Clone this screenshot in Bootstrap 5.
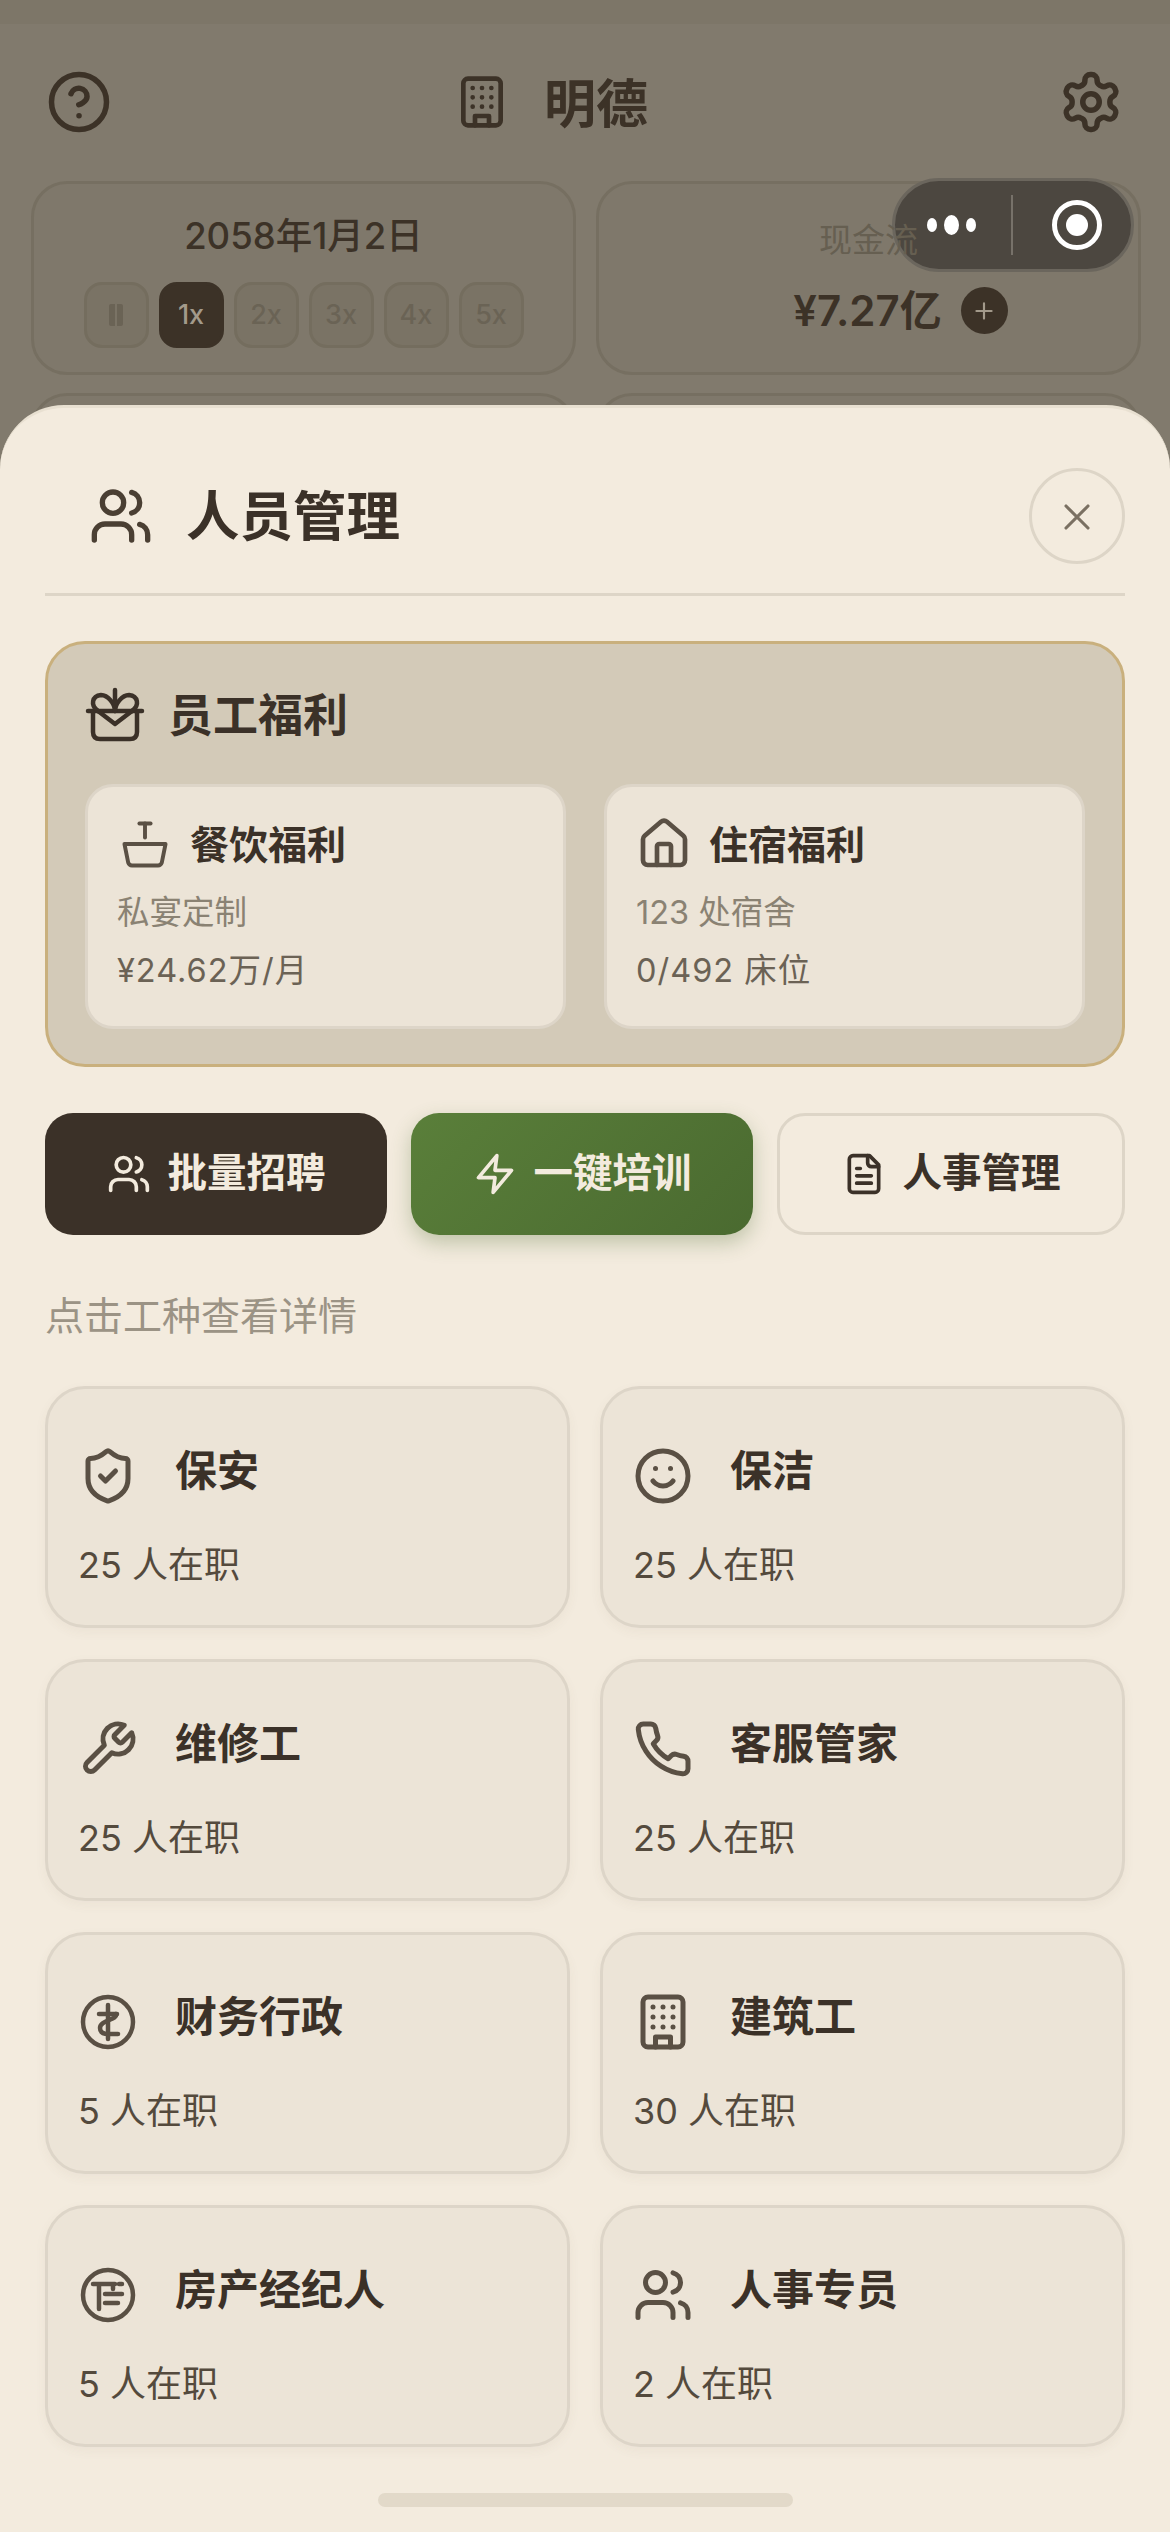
<!DOCTYPE html>
<html lang="zh-CN">
<head>
  <meta charset="UTF-8">
  <title>人员管理</title>
  <link href="https://cdn.jsdelivr.net/npm/bootstrap@5.3.3/dist/css/bootstrap.min.css" rel="stylesheet">
  <style>
    body {
      width: 1170px;
      height: 2532px;
      overflow: hidden;
      background: #f3ebde;
      color: #3b3128;
      font-family: Inter, "Noto Sans CJK SC", sans-serif;
    }

    svg.ico {
      fill: none;
      stroke: currentColor;
      stroke-width: 2;
      stroke-linecap: round;
      stroke-linejoin: round;
      flex-shrink: 0;
    }

    /* dimmed game screen behind the sheet */
    .backdrop {
      position: relative;
      height: 520px;
      overflow: hidden;
      background: #817a6d;
      color: #3c3227;
    }
    .status-strip { height: 24px; background: #7d7668; }
    .top-bar { height: 156px; padding: 0 46px; }
    .top-bar svg { color: #3c3227; }
    .top-group { margin-right: 68px; }
    .top-name { font-size: 52px; font-weight: 700; line-height: 1; margin-left: 34px; margin-top: 5px; }
    .stat-grid { display: grid; grid-template-columns: 545px 545px; column-gap: 20px; row-gap: 18px; padding: 1px 31px 0; }
    .stat-box { height: 194px; border: 3px solid #766f61; border-radius: 36px; background: #7f786b; }
    .stat-date { font-size: 36.5px; font-weight: 500; line-height: 1; margin-top: 10px; margin-bottom: 27px; }
    .speed-row { gap: 10px; }
    .speed-btn {
      width: 65px; height: 66px; border-radius: 18px;
      background: #7a7365; border: 3px solid #746d5e;
      color: #6a6355; font-size: 27px; font-weight: 500;
    }
    .speed-btn.on { background: #3c3227; border-color: #3c3227; color: #a39a8b; }
    .speed-bars { width: 14px; height: 22px; border-left: 6px solid #6a6355; border-right: 6px solid #6a6355; border-radius: 2px; }
    .cash-label { font-size: 33px; line-height: 1; color: #665f51; margin-bottom: 30px; margin-top: 2px; z-index: 2; }
    .cash-row { margin-left: 64px; }
    .cash-value { font-size: 42px; font-weight: 600; line-height: 1; }
    .cash-plus { width: 47px; height: 47px; border-radius: 50%; background: #3c3227; color: #a39a8b; margin-left: 19px; }
    .capsule {
      position: absolute; left: 892px; top: 178px; z-index: 1;
      width: 242px; height: 94px; border-radius: 47px;
      background: #4c4740; border: 3px solid #6b665d;
    }
    .capsule-dots { width: 116px; color: #fff; gap: 7px; padding-right: 3px; }
    .capsule-dots i { display: block; background: #fff; border-radius: 50%; width: 10px; height: 14px; }
    .capsule-dots i.mid { width: 15px; height: 20px; }
    .capsule-line { width: 2px; height: 60px; background: #77726a; }
    .capsule-ring { width: 50px; height: 50px; border: 5px solid #fff; border-radius: 50%; margin-left: 39px; }
    .capsule-ring span { display: block; width: 22px; height: 22px; border-radius: 50%; background: #fff; }

    /* sheet */
    .sheet {
      position: absolute; left: 0; right: 0; top: 405px; bottom: 0; z-index: 3;
      background: #f3ebde;
      border-top: 3px solid #e8e0d1;
      border-radius: 64px 64px 0 0;
      padding: 0 45px;
    }
    .sheet-head { height: 188px; border-bottom: 3px solid #ddd5c7; padding: 30px 0 0 44px; }
    .sheet-head svg { color: #4a3f33; }
    .sheet-title { font-size: 53.5px; font-weight: 700; line-height: 1; margin-left: 33px; margin-top: 2px; }
    .close-btn {
      width: 96px; height: 96px; border-radius: 50%;
      border: 3px solid #ddd5c7; background: #f3ebde;
      color: #7a7062; padding: 0;
    }
    .close-btn svg { color: #7a7062; margin-top: 2px; }

    .welfare {
      margin-top: 45px; height: 426px;
      background: #d3cab8; border: 3px solid #c9b07d; border-radius: 40px;
      padding: 36px 37px 0;
    }
    .welfare-head { height: 68px; margin-bottom: 36px; }
    .welfare-title { font-size: 45px; font-weight: 700; line-height: 1; margin-left: 23px; margin-top: 3px; }
    .welfare-grid { display: grid; grid-template-columns: 481px 481px; column-gap: 38px; }
    .welfare-box {
      height: 245px; background: #ece4d7; border: 3px solid #ddd5c8; border-radius: 28px;
      padding: 27px 0 0 29px;
    }
    .welfare-box-head { height: 60px; }
    .welfare-box-head svg { color: #5a5044; }
    .welfare-box-title { font-size: 39px; font-weight: 700; line-height: 1; margin-left: 17px; }
    .welfare-sub { font-size: 32.5px; line-height: 1; color: #8a8273; margin-top: 23px; }
    .welfare-cost { font-size: 32.5px; line-height: 1; color: #6b6255; margin-top: 25px; letter-spacing: 1px; }

    .action-row { display: grid; grid-template-columns: 342px 342px 348px; column-gap: 24px; margin-top: 46px; }
    .action-btn {
      height: 122px; border-radius: 28px; font-size: 39.5px; font-weight: 600;
      display: flex; align-items: center; justify-content: center; gap: 17px; padding: 0; line-height: 1;
    }
    .act-dark, .act-dark:hover { background: #3b3128; color: #f3ebde; border: 0; }
    .act-green, .act-green:hover {
      background: linear-gradient(135deg, #5a7f3a, #4a6a30); color: #f3ebde; border: 0;
      box-shadow: 0 8px 20px rgba(74, 106, 48, .3);
    }
    .act-plain, .act-plain:hover { background: #f3ebde; color: #3b3128; border: 3px solid #ddd5c7; }

    .hint { font-size: 39px; line-height: 1; color: #9b9385; margin: 61px 0 51px; }

    .job-grid { display: grid; grid-template-columns: 525px 525px; column-gap: 30px; row-gap: 31px; }
    .job-box {
      height: 242px; background: #ece4d7; border: 3px solid #ddd5c8; border-radius: 40px;
      padding: 0 0 0 30px; box-shadow: 0 4px 12px rgba(90, 80, 60, .05);
    }
    .job-head { height: 60px; margin-top: 57px; }
    .job-head svg { color: #5a5044; }
    .job-name { font-size: 42px; font-weight: 700; line-height: 1; margin-left: 37px; margin-top: -10px; }
    .job-count { font-size: 36px; line-height: 1; color: #544a3d; margin-top: 41px; }

    .home-bar {
      position: absolute; left: 378px; bottom: 25px;
      width: 415px; height: 14px; border-radius: 7px; background: #e2d9c9;
    }
  </style>
</head>
<body>

  <svg width="0" height="0" class="position-absolute">
    <defs>
      <symbol id="i-users" viewBox="0 0 24 24"><path d="M16 21v-2a4 4 0 0 0-4-4H6a4 4 0 0 0-4 4v2"/><circle cx="9" cy="7" r="4"/><path d="M22 21v-2a4 4 0 0 0-3-3.87"/><path d="M16 3.13a4 4 0 0 1 0 7.75"/></symbol>
      <symbol id="i-help" viewBox="0 0 24 24"><circle cx="12" cy="12" r="10"/><path d="M9.09 9a3 3 0 0 1 5.83 1c0 2-3 3-3 3"/><path d="M12 17h.01"/></symbol>
      <symbol id="i-building" viewBox="0 0 24 24"><rect x="4" y="2" width="16" height="20" rx="2"/><path d="M9 22v-4h6v4"/><path d="M8 6h.01M12 6h.01M16 6h.01M8 10h.01M12 10h.01M16 10h.01M8 14h.01M12 14h.01M16 14h.01"/></symbol>
      <symbol id="i-gear" viewBox="0 0 24 24"><path d="M12.22 2h-.44a2 2 0 0 0-2 2v.18a2 2 0 0 1-1 1.73l-.43.25a2 2 0 0 1-2 0l-.15-.08a2 2 0 0 0-2.73.73l-.22.38a2 2 0 0 0 .73 2.73l.15.1a2 2 0 0 1 1 1.72v.51a2 2 0 0 1-1 1.74l-.15.09a2 2 0 0 0-.73 2.73l.22.38a2 2 0 0 0 2.73.73l.15-.08a2 2 0 0 1 2 0l.43.25a2 2 0 0 1 1 1.73V20a2 2 0 0 0 2 2h.44a2 2 0 0 0 2-2v-.18a2 2 0 0 1 1-1.73l.43-.25a2 2 0 0 1 2 0l.15.08a2 2 0 0 0 2.73-.73l.22-.39a2 2 0 0 0-.73-2.73l-.15-.08a2 2 0 0 1-1-1.74v-.5a2 2 0 0 1 1-1.74l.15-.09a2 2 0 0 0 .73-2.73l-.22-.38a2 2 0 0 0-2.73-.73l-.15.08a2 2 0 0 1-2 0l-.43-.25a2 2 0 0 1-1-1.73V4a2 2 0 0 0-2-2z"/><circle cx="12" cy="12" r="3"/></symbol>
      <symbol id="i-x" viewBox="0 0 24 24"><path d="M18 6 6 18M6 6l12 12"/></symbol>
      <symbol id="i-plus" viewBox="0 0 24 24"><path d="M12 5v14M5 12h14"/></symbol>
      <symbol id="i-gift" viewBox="0 0 60 60"><path d="M3 27H57"/><path d="M8 27V48q0 7 7 7H45q7 0 7-7V27"/><path d="M13 27 30 40 47 27"/><path d="M13 27C5 21 7 12 16 11 23 11 30 20 30 27"/><path d="M47 27C55 21 53 12 44 11 37 11 30 20 30 27"/><path d="M30 6V27"/></symbol>
      <symbol id="i-bowl" viewBox="0 0 60 60"><path d="M24 8H36"/><path d="M30 8V23"/><path d="M8 30H52L48 50Q47 53 44 53H16Q13 53 12 50Z"/></symbol>
      <symbol id="i-house" viewBox="0 0 24 24"><path d="M15 21v-8a1 1 0 0 0-1-1h-4a1 1 0 0 0-1 1v8"/><path d="M3 10a2 2 0 0 1 .709-1.528l7-5.999a2 2 0 0 1 2.582 0l7 5.999A2 2 0 0 1 21 10v9a2 2 0 0 1-2 2H5a2 2 0 0 1-2-2z"/></symbol>
      <symbol id="i-zap" viewBox="0 0 24 24"><path d="M13 2 3 14h9l-1 8 10-12h-9l1-8z"/></symbol>
      <symbol id="i-file" viewBox="0 0 24 24"><path d="M15 2H6a2 2 0 0 0-2 2v16a2 2 0 0 0 2 2h12a2 2 0 0 0 2-2V7Z"/><path d="M14 2v4a2 2 0 0 0 2 2h4"/><path d="M10 9H8M16 13H8M16 17H8"/></symbol>
      <symbol id="i-shield" viewBox="0 0 24 24"><path d="M20 13c0 5-3.5 7.5-7.66 8.95a1 1 0 0 1-.67-.01C7.5 20.5 4 18 4 13V6a1 1 0 0 1 1-1c2 0 4.5-1.2 6.24-2.72a1.17 1.17 0 0 1 1.52 0C14.51 3.81 17 5 19 5a1 1 0 0 1 1 1z"/><path d="m9 12 2 2 4-4"/></symbol>
      <symbol id="i-smile" viewBox="0 0 24 24"><circle cx="12" cy="12" r="10"/><path d="M8 14s1.5 2 4 2 4-2 4-2"/><path d="M9 9h.01M15 9h.01"/></symbol>
      <symbol id="i-wrench" viewBox="0 0 24 24"><path d="M14.7 6.3a1 1 0 0 0 0 1.4l1.6 1.6a1 1 0 0 0 1.4 0l3.77-3.77a6 6 0 0 1-7.94 7.94l-6.91 6.91a2.12 2.12 0 0 1-3-3l6.91-6.91a6 6 0 0 1 7.94-7.94l-3.76 3.76z"/></symbol>
      <symbol id="i-phone" viewBox="0 0 24 24"><path d="M22 16.92v3a2 2 0 0 1-2.18 2 19.79 19.79 0 0 1-8.63-3.07 19.5 19.5 0 0 1-6-6 19.79 19.79 0 0 1-3.07-8.67A2 2 0 0 1 4.11 2h3a2 2 0 0 1 2 1.72 12.84 12.84 0 0 0 .7 2.81 2 2 0 0 1-.45 2.11L8.09 9.91a16 16 0 0 0 6 6l1.27-1.27a2 2 0 0 1 2.11-.45 12.84 12.84 0 0 0 2.81.7A2 2 0 0 1 22 16.92z"/></symbol>
      <symbol id="i-coin" viewBox="0 0 60 60"><circle cx="30" cy="30" r="25"/><path d="M30 13V47"/><path d="M21 22H39"/><path d="M38 22C40 28 22 28 22 36 22 41 26 42 30 42H40"/></symbol>
      <symbol id="i-deed" viewBox="0 0 60 60"><circle cx="30" cy="30" r="25"/><path d="M15 19H37M41 19H44M21 19V44M35 19V24M27 29H44M27 38H40"/></symbol>
    </defs>
  </svg>

  <div class="backdrop">
    <div class="status-strip"></div>
    <div class="top-bar d-flex align-items-center justify-content-between">
      <svg class="ico" width="66" height="66"><use href="#i-help"/></svg>
      <div class="top-group d-flex align-items-center">
        <svg class="ico" width="56" height="56"><use href="#i-building"/></svg>
        <span class="top-name">明德</span>
      </div>
      <svg class="ico" width="66" height="66"><use href="#i-gear"/></svg>
    </div>
    <div class="stat-grid">
      <div class="stat-box d-flex flex-column align-items-center justify-content-center">
        <div class="stat-date">2058年1月2日</div>
        <div class="speed-row d-flex">
          <div class="speed-btn d-flex align-items-center justify-content-center"><span class="speed-bars"></span></div>
          <div class="speed-btn on d-flex align-items-center justify-content-center">1x</div>
          <div class="speed-btn d-flex align-items-center justify-content-center">2x</div>
          <div class="speed-btn d-flex align-items-center justify-content-center">3x</div>
          <div class="speed-btn d-flex align-items-center justify-content-center">4x</div>
          <div class="speed-btn d-flex align-items-center justify-content-center">5x</div>
        </div>
      </div>
      <div class="stat-box d-flex flex-column align-items-center justify-content-center">
        <div class="cash-label position-relative">现金流</div>
        <div class="cash-row d-flex align-items-center">
          <span class="cash-value">¥7.27亿</span>
          <span class="cash-plus d-flex align-items-center justify-content-center"><svg class="ico" width="26" height="26"><use href="#i-plus"/></svg></span>
        </div>
      </div>
      <div class="stat-box"></div>
      <div class="stat-box"></div>
    </div>
    <div class="capsule d-flex align-items-center">
      <div class="capsule-dots d-flex align-items-center justify-content-center"><i></i><i class="mid"></i><i></i></div>
      <div class="capsule-line"></div>
      <div class="capsule-ring d-flex align-items-center justify-content-center"><span></span></div>
    </div>
  </div>

  <div class="sheet">
    <div class="sheet-head d-flex align-items-center justify-content-between">
      <div class="d-flex align-items-center">
        <svg class="ico" width="64" height="64"><use href="#i-users"/></svg>
        <span class="sheet-title">人员管理</span>
      </div>
      <button type="button" class="btn close-btn d-flex align-items-center justify-content-center"><svg class="ico" width="44" height="44"><use href="#i-x" stroke-width="1.7"/></svg></button>
    </div>

    <div class="welfare">
      <div class="welfare-head d-flex align-items-center">
        <svg class="ico" width="60" height="60"><use href="#i-gift" stroke-width="4.5"/></svg>
        <span class="welfare-title">员工福利</span>
      </div>
      <div class="welfare-grid">
        <div class="welfare-box">
          <div class="welfare-box-head d-flex align-items-center">
            <svg class="ico" width="56" height="56"><use href="#i-bowl" stroke-width="4.2"/></svg>
            <span class="welfare-box-title">餐饮福利</span>
          </div>
          <div class="welfare-sub">私宴定制</div>
          <div class="welfare-cost">¥24.62万/月</div>
        </div>
        <div class="welfare-box">
          <div class="welfare-box-head d-flex align-items-center">
            <svg class="ico" width="56" height="56"><use href="#i-house"/></svg>
            <span class="welfare-box-title">住宿福利</span>
          </div>
          <div class="welfare-sub">123 处宿舍</div>
          <div class="welfare-cost">0/492 床位</div>
        </div>
      </div>
    </div>

    <div class="action-row">
      <button type="button" class="btn action-btn act-dark"><svg class="ico" width="44" height="44"><use href="#i-users"/></svg>批量招聘</button>
      <button type="button" class="btn action-btn act-green"><svg class="ico" width="44" height="44"><use href="#i-zap"/></svg>一键培训</button>
      <button type="button" class="btn action-btn act-plain"><svg class="ico" width="44" height="44"><use href="#i-file"/></svg>人事管理</button>
    </div>

    <div class="hint">点击工种查看详情</div>

    <div class="job-grid">
      <div class="job-box">
        <div class="job-head d-flex align-items-center"><svg class="ico" width="60" height="60"><use href="#i-shield"/></svg><span class="job-name">保安</span></div>
        <div class="job-count">25 人在职</div>
      </div>
      <div class="job-box">
        <div class="job-head d-flex align-items-center"><svg class="ico" width="60" height="60"><use href="#i-smile"/></svg><span class="job-name">保洁</span></div>
        <div class="job-count">25 人在职</div>
      </div>
      <div class="job-box">
        <div class="job-head d-flex align-items-center"><svg class="ico" width="60" height="60"><use href="#i-wrench"/></svg><span class="job-name">维修工</span></div>
        <div class="job-count">25 人在职</div>
      </div>
      <div class="job-box">
        <div class="job-head d-flex align-items-center"><svg class="ico" width="60" height="60"><use href="#i-phone"/></svg><span class="job-name">客服管家</span></div>
        <div class="job-count">25 人在职</div>
      </div>
      <div class="job-box">
        <div class="job-head d-flex align-items-center"><svg class="ico" width="60" height="60"><use href="#i-coin" stroke-width="4.5"/></svg><span class="job-name">财务行政</span></div>
        <div class="job-count">5 人在职</div>
      </div>
      <div class="job-box">
        <div class="job-head d-flex align-items-center"><svg class="ico" width="60" height="60"><use href="#i-building"/></svg><span class="job-name">建筑工</span></div>
        <div class="job-count">30 人在职</div>
      </div>
      <div class="job-box">
        <div class="job-head d-flex align-items-center"><svg class="ico" width="60" height="60"><use href="#i-deed" stroke-width="4.5"/></svg><span class="job-name">房产经纪人</span></div>
        <div class="job-count">5 人在职</div>
      </div>
      <div class="job-box">
        <div class="job-head d-flex align-items-center"><svg class="ico" width="60" height="60"><use href="#i-users"/></svg><span class="job-name">人事专员</span></div>
        <div class="job-count">2 人在职</div>
      </div>
    </div>

    <div class="home-bar"></div>
  </div>

  <script src="https://cdn.jsdelivr.net/npm/bootstrap@5.3.3/dist/js/bootstrap.bundle.min.js"></script>
</body>
</html>
